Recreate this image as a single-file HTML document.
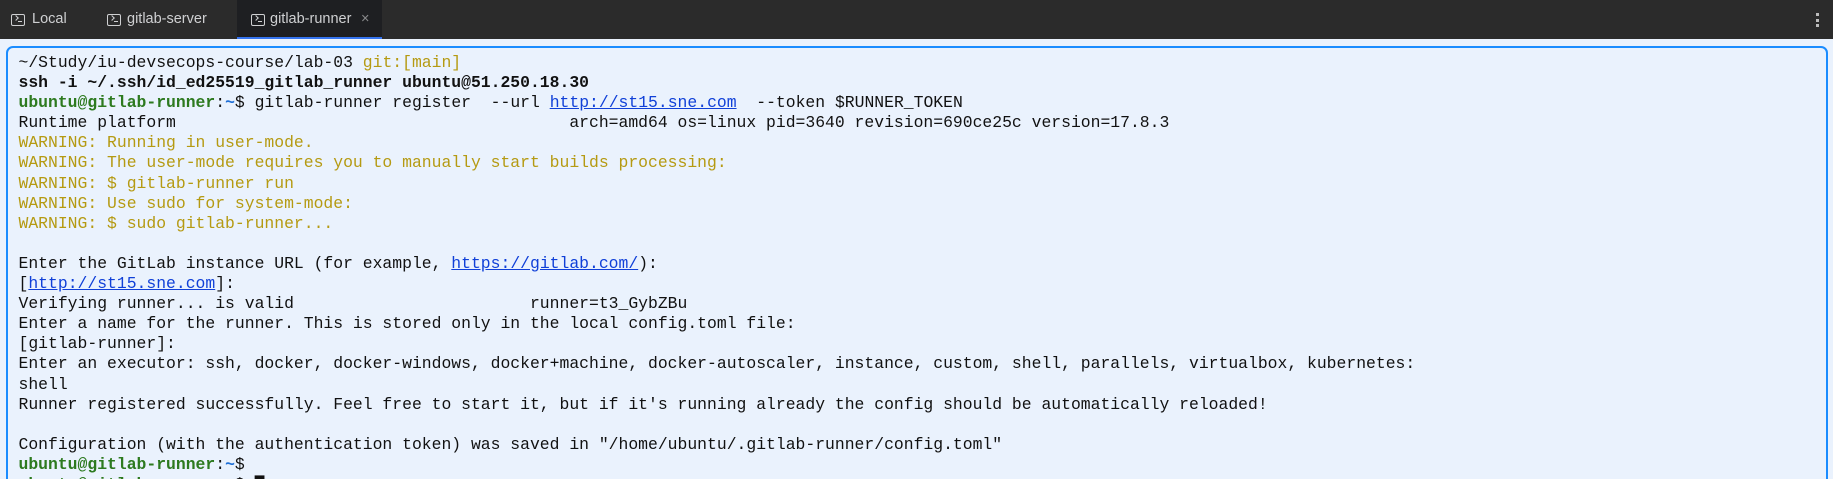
<!DOCTYPE html>
<html><head><meta charset="utf-8"><style>
html,body{margin:0;padding:0;width:1833px;height:479px;overflow:hidden;background:#eaf2fd;}
.wrap{position:relative;width:1833px;height:479px;overflow:hidden;}
.bar{position:absolute;left:0;top:0;width:1833px;height:39px;background:#2b2b2b;}
.tab{position:absolute;top:0;height:39px;font:14.5px "Liberation Sans",sans-serif;color:#cfd0d2;line-height:39px;}
.tab .ic{position:absolute;top:14px;width:12px;height:10px;border:1.3px solid #cfd0d2;border-radius:2px;}
.tab .ic:before{content:"";position:absolute;left:2px;top:1px;width:3px;height:3px;border-right:1.2px solid #cfd0d2;border-bottom:1.2px solid #cfd0d2;transform:rotate(-45deg);}
.tab .ic:after{content:"";position:absolute;left:6px;top:6px;width:4px;height:1.2px;background:#cfd0d2;}
.active{background:#1e1f22;border-bottom:2px solid #3574f0;box-sizing:border-box;}
.term{position:absolute;left:6px;top:46px;width:1818px;height:460px;border:2px solid #1a8cff;border-radius:7px;background:#eaf2fd;}
pre{position:absolute;left:18.5px;top:53px;margin:0;font:16.4px/20.1px "Liberation Mono",monospace;color:#111;}
.g{color:#2d7a1f;font-weight:bold}.b{color:#1f6fd6;font-weight:bold}.y{color:#b59a12}.w{color:#b59a12}
a{color:#1040d8;text-decoration:underline}
.dots{position:absolute;right:14px;top:13px;width:3px;}
.dots i{display:block;width:3px;height:3px;background:#bbb;margin-bottom:2.5px}
</style></head><body><div class="wrap">
<div class="bar">
<div class="tab" style="left:0;width:90px"><span class="ic" style="left:11px"></span><span style="position:absolute;left:32px">Local</span></div>
<div class="tab" style="left:96px;width:140px"><span class="ic" style="left:11px"></span><span style="position:absolute;left:31px">gitlab-server</span></div>
<div class="tab active" style="left:237px;width:145px"><span class="ic" style="left:14px"></span><span style="position:absolute;left:33px">gitlab-runner</span><span style="position:absolute;left:124px;color:#8a8b8d">×</span></div>
<div class="dots"><i></i><i></i><i></i></div>
</div>
<div class="term"></div>
<pre>~/Study/iu-devsecops-course/lab-03 <span class="y">git:[main]</span>
<b>ssh -i ~/.ssh/id_ed25519_gitlab_runner ubuntu@51.250.18.30</b>
<span class="g">ubuntu@gitlab-runner</span>:<span class="b">~</span>$ gitlab-runner register  --url <a>http://st15.sne.com</a>  --token $RUNNER_TOKEN
Runtime platform                                        arch=amd64 os=linux pid=3640 revision=690ce25c version=17.8.3
<span class="w">WARNING: Running in user-mode.</span>
<span class="w">WARNING: The user-mode requires you to manually start builds processing:</span>
<span class="w">WARNING: $ gitlab-runner run</span>
<span class="w">WARNING: Use sudo for system-mode:</span>
<span class="w">WARNING: $ sudo gitlab-runner...</span>

Enter the GitLab instance URL (for example, <a>https://gitlab.com/</a>):
[<a>http://st15.sne.com</a>]:
Verifying runner... is valid                        runner=t3_GybZBu
Enter a name for the runner. This is stored only in the local config.toml file:
[gitlab-runner]:
Enter an executor: ssh, docker, docker-windows, docker+machine, docker-autoscaler, instance, custom, shell, parallels, virtualbox, kubernetes:
shell
Runner registered successfully. Feel free to start it, but if it's running already the config should be automatically reloaded!

Configuration (with the authentication token) was saved in "/home/ubuntu/.gitlab-runner/config.toml"
<span class="g">ubuntu@gitlab-runner</span>:<span class="b">~</span>$
<span class="g">ubuntu@gitlab-runner</span>:<span class="b">~</span>$ █</pre>
</div></body></html>
